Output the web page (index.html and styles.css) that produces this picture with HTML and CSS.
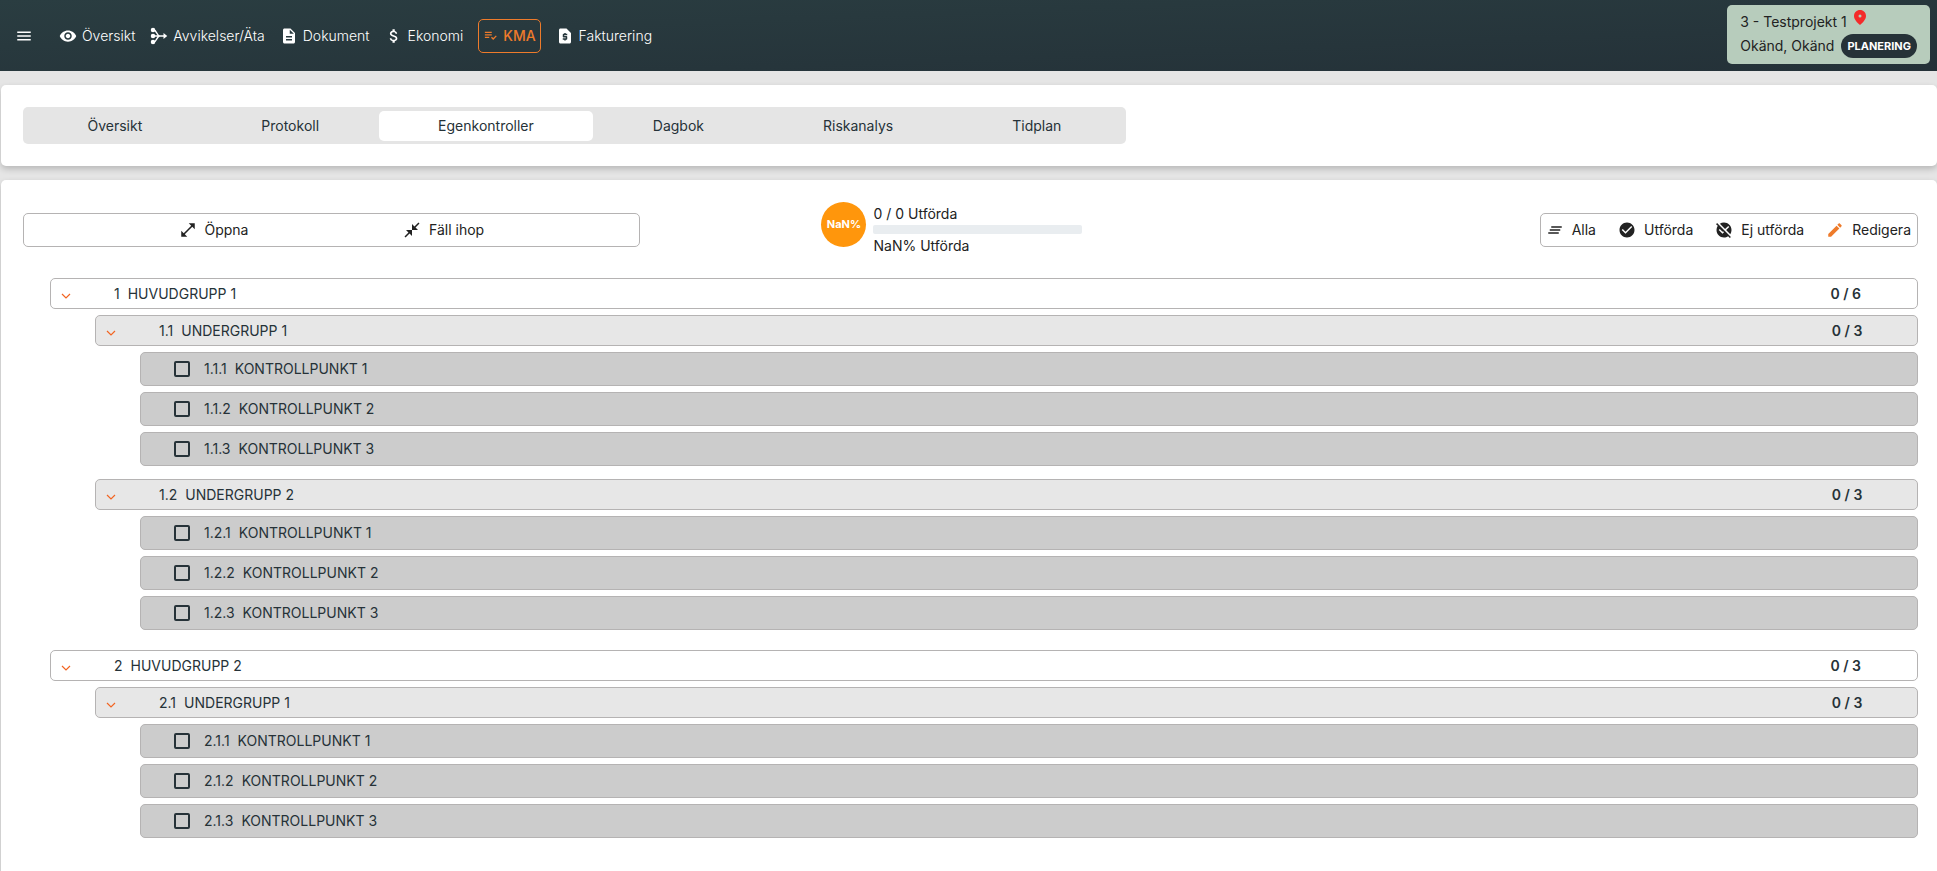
FILE: index.html
```html
<!DOCTYPE html>
<html lang="sv">
  <head>
    <meta charset="UTF-8" />
    <meta name="viewport" content="width=device-width, initial-scale=1.0" />
    <title>Egenkontroller</title>
    <link rel="stylesheet" href="styles.css">
  </head>
  <body>
    <header class="topbar">
      <button class="menu-btn" aria-label="Meny">
        <svg class="icon" viewBox="0 0 24 24"><path d="M3 18h18v-2H3v2zm0-5h18v-2H3v2zm0-7v2h18V6H3z"/></svg>
      </button>
      <nav class="main-nav">
        <a href="#">
          <svg class="icon" viewBox="0 0 24 24"><path d="M12 4.500C7 4.500 2.730 7.610 1 12c1.730 4.390 6 7.500 11 7.500s9.270-3.110 11-7.500c-1.730-4.390-6-7.500-11-7.500zM12 17c-2.760 0-5-2.240-5-5s2.240-5 5-5 5 2.240 5 5-2.240 5-5 5zm0-8c-1.660 0-3 1.340-3 3s1.340 3 3 3 3-1.340 3-3-1.340-3-3-3z"/></svg>
          Översikt
        </a>
        <a href="#">
          <svg class="icon" viewBox="0 0 24 24"><circle cx="4" cy="4" r="3"/><circle cx="4" cy="12" r="3"/><circle cx="4" cy="20" r="3"/><path d="M4 4h1c4 0 4 8 8 8M4 20h1c4 0 4-8 8-8M4 12h15" fill="none" stroke="currentColor" stroke-width="2"/><path d="M18 8l5 4-5 4z"/></svg>
          Avvikelser/Äta
        </a>
        <a href="#">
          <svg class="icon" viewBox="0 0 24 24"><path d="M14 2H6c-1.100 0-2 .9-2 2v16c0 1.100.89 2 1.990 2H18c1.100 0 2-.9 2-2V8l-6-6zm2 16H8v-2h8v2zm0-4H8v-2h8v2zm-3-5V3.500L18.500 9H13z"/></svg>
          Dokument
        </a>
        <a href="#">
          <svg class="icon" viewBox="0 0 24 24"><path d="M11.800 10.900c-2.270-.59-3-1.200-3-2.150 0-1.090 1.010-1.850 2.700-1.850 1.780 0 2.440.85 2.500 2.100h2.210c-.07-1.720-1.120-3.300-3.210-3.810V3h-3v2.160c-1.940.42-3.500 1.680-3.500 3.610 0 2.310 1.910 3.460 4.700 4.130 2.500.6 3 1.480 3 2.410 0 .69-.49 1.790-2.700 1.790-2.060 0-2.870-.92-2.980-2.100h-2.200c.12 2.190 1.760 3.420 3.680 3.830V21h3v-2.150c1.950-.37 3.500-1.500 3.500-3.550 0-2.840-2.430-3.810-4.700-4.400z"/></svg>
          Ekonomi
        </a>
        <a href="#" class="active">
          <svg class="icon" viewBox="0 0 24 24"><path d="M3 10h11v2H3zm0-4h11v2H3zm0 8h7v2H3zm17.590-2.070l-4.250 4.240-2.120-2.120-1.410 1.410L16.340 19 22 13.340z"/></svg>
          KMA
        </a>
        <a href="#">
          <svg class="icon" viewBox="0 0 24 24"><path d="M14 2H6c-1.100 0-1.990.9-1.990 2L4 20c0 1.100.89 2 1.990 2H18c1.100 0 2-.9 2-2V8l-6-6zm1 9h-4v1h3c.55 0 1 .45 1 1v3c0 .55-.45 1-1 1h-1v1h-2v-1H9v-2h4v-1h-3c-.55 0-1-.45-1-1v-3c0-.55.45-1 1-1h1V8h2v1h2v2z"/></svg>
          Fakturering
        </a>
      </nav>
      <div class="project">
        <div class="project-row">
          <span>3 - Testprojekt 1</span>
          <svg class="pin" viewBox="0 0 12 15"><path fill-rule="evenodd" d="M6 0C2.700 0 0 2.500 0 5.900 0 9.200 3 12.300 6 15c3-2.700 6-5.800 6-9.100C12 2.500 9.300 0 6 0zm0 4.500a1.500 1.500 0 1 1 0 3 1.500 1.500 0 0 1 0-3z"/></svg>
        </div>
        <div class="project-row">
          <span>Okänd, Okänd</span>
          <span class="badge">PLANERING</span>
        </div>
      </div>
    </header>

    <section class="card tabs-card">
      <nav class="tabs">
        <a href="#">Översikt</a>
        <a href="#">Protokoll</a>
        <a href="#" class="active">Egenkontroller</a>
        <a href="#">Dagbok</a>
        <a href="#">Riskanalys</a>
        <a href="#">Tidplan</a>
      </nav>
    </section>

    <main class="card content">
      <div class="toolbar">
        <div class="btn-group expand-group">
          <button>
            <svg class="icon" viewBox="0 0 24 24"><path d="M21 11V3h-8l3.290 3.290-10 10L3 13v8h8l-3.290-3.290 10-10z"/></svg>
            Öppna
          </button>
          <button>
            <svg class="icon" viewBox="0 0 24 24"><path d="M22 3.410L16.710 8.700 20 12h-8V4l3.290 3.290L20.590 2 22 3.410zM3.410 22l5.290-5.290L12 20v-8H4l3.290 3.290L2 20.590 3.410 22z"/></svg>
            Fäll ihop
          </button>
        </div>
        <div class="progress">
          <div class="circle">NaN%</div>
          <div class="progress-info">
            <div>0 / 0 Utförda</div>
            <div class="bar"></div>
            <div>NaN% Utförda</div>
          </div>
        </div>
        <div class="btn-group filter-group">
          <button>
            <svg class="icon" viewBox="0 0 24 24"><path d="M5 13h14v-2H5v2zm-2 4h14v-2H3v2zM7 7v2h14V7H7z"/></svg>
            Alla
          </button>
          <button>
            <svg class="icon" viewBox="0 0 24 24"><path d="M12 2C6.480 2 2 6.480 2 12s4.480 10 10 10 10-4.480 10-10S17.520 2 12 2zm-2 15l-5-5 1.410-1.410L10 14.170l7.590-7.590L19 8l-9 9z"/></svg>
            Utförda
          </button>
          <button>
            <svg class="icon" viewBox="0 0 24 24"><path d="M21.190 21.190L2.810 2.810 1.390 4.220l2.270 2.270C2.610 8.070 2 9.960 2 12c0 5.520 4.480 10 10 10 2.040 0 3.930-.61 5.510-1.660l2.270 2.270 1.410-1.420zM10 17l-5-5 1.410-1.410L10 14.170l.59-.58 1.410 1.410-2 2zM13.410 10.590L6.490 3.660C8.070 2.610 9.960 2 12 2c5.520 0 10 4.480 10 10 0 2.040-.61 3.930-1.660 5.510l-5.510-5.510L19 8l-1.410-1.410-4.180 4z"/></svg>
            Ej utförda
          </button>
          <button>
            <svg class="icon orange" viewBox="0 0 24 24"><path d="M3 17.250V21h3.750L17.810 9.940l-3.750-3.750L3 17.250zM20.710 7.040c.39-.39.39-1.020 0-1.410l-2.340-2.340c-.39-.39-1.020-.39-1.410 0l-1.830 1.830 3.750 3.750 1.830-1.830z"/></svg>
            Redigera
          </button>
        </div>
      </div>

      <div class="groups">
        <div class="row main-row">
          <button class="toggle" aria-label="Visa grupp"><svg viewBox="0 0 10 6"><path d="M1 1l4 4 4-4"/></svg></button>
          <span class="num">1</span><span>HUVUDGRUPP 1</span>
          <span class="count">0 / 6</span>
        </div>
        <div class="children">
          <div class="row sub-row">
            <button class="toggle" aria-label="Visa grupp"><svg viewBox="0 0 10 6"><path d="M1 1l4 4 4-4"/></svg></button>
            <span class="num">1.1</span><span>UNDERGRUPP 1</span>
            <span class="count">0 / 3</span>
          </div>
          <div class="children">
            <label class="row item-row"><input type="checkbox"><span class="num">1.1.1</span><span>KONTROLLPUNKT 1</span></label>
            <label class="row item-row"><input type="checkbox"><span class="num">1.1.2</span><span>KONTROLLPUNKT 2</span></label>
            <label class="row item-row"><input type="checkbox"><span class="num">1.1.3</span><span>KONTROLLPUNKT 3</span></label>
          </div>
          <div class="row sub-row">
            <button class="toggle" aria-label="Visa grupp"><svg viewBox="0 0 10 6"><path d="M1 1l4 4 4-4"/></svg></button>
            <span class="num">1.2</span><span>UNDERGRUPP 2</span>
            <span class="count">0 / 3</span>
          </div>
          <div class="children">
            <label class="row item-row"><input type="checkbox"><span class="num">1.2.1</span><span>KONTROLLPUNKT 1</span></label>
            <label class="row item-row"><input type="checkbox"><span class="num">1.2.2</span><span>KONTROLLPUNKT 2</span></label>
            <label class="row item-row"><input type="checkbox"><span class="num">1.2.3</span><span>KONTROLLPUNKT 3</span></label>
          </div>
        </div>

        <div class="row main-row">
          <button class="toggle" aria-label="Visa grupp"><svg viewBox="0 0 10 6"><path d="M1 1l4 4 4-4"/></svg></button>
          <span class="num">2</span><span>HUVUDGRUPP 2</span>
          <span class="count">0 / 3</span>
        </div>
        <div class="children">
          <div class="row sub-row">
            <button class="toggle" aria-label="Visa grupp"><svg viewBox="0 0 10 6"><path d="M1 1l4 4 4-4"/></svg></button>
            <span class="num">2.1</span><span>UNDERGRUPP 1</span>
            <span class="count">0 / 3</span>
          </div>
          <div class="children">
            <label class="row item-row"><input type="checkbox"><span class="num">2.1.1</span><span>KONTROLLPUNKT 1</span></label>
            <label class="row item-row"><input type="checkbox"><span class="num">2.1.2</span><span>KONTROLLPUNKT 2</span></label>
            <label class="row item-row"><input type="checkbox"><span class="num">2.1.3</span><span>KONTROLLPUNKT 3</span></label>
          </div>
        </div>
      </div>
    </main>
  </body>
</html>
```

FILE: styles.css
```css
* {
  box-sizing: border-box;
}

body {
  margin: 0;
  min-height: 100vh;
  display: flex;
  flex-direction: column;
  background: #e5e5e5;
  color: #263238;
  font-family: Inter, "Open Sans", sans-serif;
  font-size: 14px;
  line-height: 20px;
}

a {
  color: inherit;
  text-decoration: none;
}

button {
  background: none;
  border: none;
  padding: 0;
  color: inherit;
  font: inherit;
  cursor: pointer;
}

.icon {
  width: 18px;
  height: 18px;
  fill: currentColor;
  flex-shrink: 0;
}

.orange {
  color: #ee7b2b;
}

/* top bar */
.topbar {
  display: flex;
  align-items: center;
  min-height: 71px;
  padding: 0 7px 0 15px;
  background: linear-gradient(to bottom right, #2a3d41, #243138);
  color: #fff;
}

.menu-btn {
  display: flex;
  margin-right: 26px;
}

.main-nav {
  display: flex;
  align-items: center;
  gap: 15px;
  font-weight: 300;
}

.main-nav a {
  display: flex;
  align-items: center;
  gap: 5px;
}

.main-nav .active {
  padding: 6px 4px;
  border: 1px solid #ee7b2b;
  border-radius: 5px;
  color: #ee7b2b;
  font-weight: 500;
}

.main-nav .active .icon {
  width: 15px;
  height: 15px;
}

.project {
  align-self: flex-start;
  margin: 5px 0 0 auto;
  padding: 5px 13px 6px;
  border-radius: 5px;
  background: #b7ccbc;
  color: #222;
}

.project-row {
  display: flex;
  gap: 7px;
  line-height: 24px;
}

.pin {
  width: 12px;
  height: 15px;
  fill: #f42a2a;
}

.badge {
  padding: 0 6px;
  border-radius: 12px;
  background: #263238;
  color: #fff;
  font-size: 11px;
  font-weight: 700;
}

/* cards */
.card {
  margin: 14px 0 0 1px;
  padding: 22px 19px 22px 22px;
  border-radius: 5px;
  background: #fff;
  box-shadow: 0 3px 6px rgba(0, 0, 0, 0.2);
}

.tabs {
  display: flex;
  width: 58.2%;
  padding: 4px 5px 3px;
  border-radius: 5px;
  background: #e5e5e5;
}

.tabs a {
  flex: 1 1 auto;
  padding: 5px 0;
  border-radius: 5px;
  text-align: center;
}

.tabs .active {
  background: #fff;
}

.content {
  flex: 1;
  border-radius: 5px 5px 0 0;
}

/* toolbar */
.toolbar {
  display: grid;
  grid-template-columns: repeat(3, 1fr);
  align-items: center;
  color: #222;
}

.btn-group {
  display: flex;
  align-items: center;
  height: 34px;
  border: 1px solid #b5b3b3;
  border-radius: 5px;
}

.btn-group button {
  display: flex;
  align-items: center;
  gap: 8px;
}

.expand-group {
  justify-content: space-evenly;
  margin-right: 15px;
}

.filter-group {
  justify-self: end;
  gap: 22px;
  padding: 0 6px 0 5px;
}

.progress {
  display: flex;
  justify-content: center;
  gap: 7px;
}

.circle {
  width: 45px;
  height: 45px;
  border-radius: 50%;
  background: #ff960c;
  color: #fff;
  font-size: 11px;
  font-weight: 700;
  line-height: 45px;
  text-align: center;
}

.progress-info {
  width: 246px;
  line-height: 23px;
}

.bar {
  width: 209px;
  height: 9px;
  border-radius: 2px;
  background: #e9edf0;
}

/* control list */
.groups {
  margin: 21px 0 0 27px;
}

.row {
  display: flex;
  align-items: center;
  height: 31px;
  margin-bottom: 6px;
  border: 1px solid #b5b3b3;
  border-radius: 5px;
}

.children {
  margin-left: 45px;
  padding-bottom: 7px;
}

.sub-row {
  background: #e7e7e7;
}

.item-row {
  height: 34px;
  padding-left: 33px;
  background: #ccc;
}

.num {
  margin-right: 8px;
}

.count {
  margin-left: auto;
  padding-right: 3%;
  font-weight: 600;
}

.toggle {
  width: 63px;
  padding: 4px 0 0 10px;
  text-align: left;
}

.toggle svg {
  display: block;
  width: 10px;
  height: 6px;
  fill: none;
  stroke: #f26522;
  stroke-width: 1.2;
}

.item-row input {
  appearance: none;
  width: 16px;
  height: 16px;
  margin: 0 14px 0 0;
  border: 2px solid #263238;
  border-radius: 2px;
}

.item-row input:checked {
  background: #263238;
}
```
